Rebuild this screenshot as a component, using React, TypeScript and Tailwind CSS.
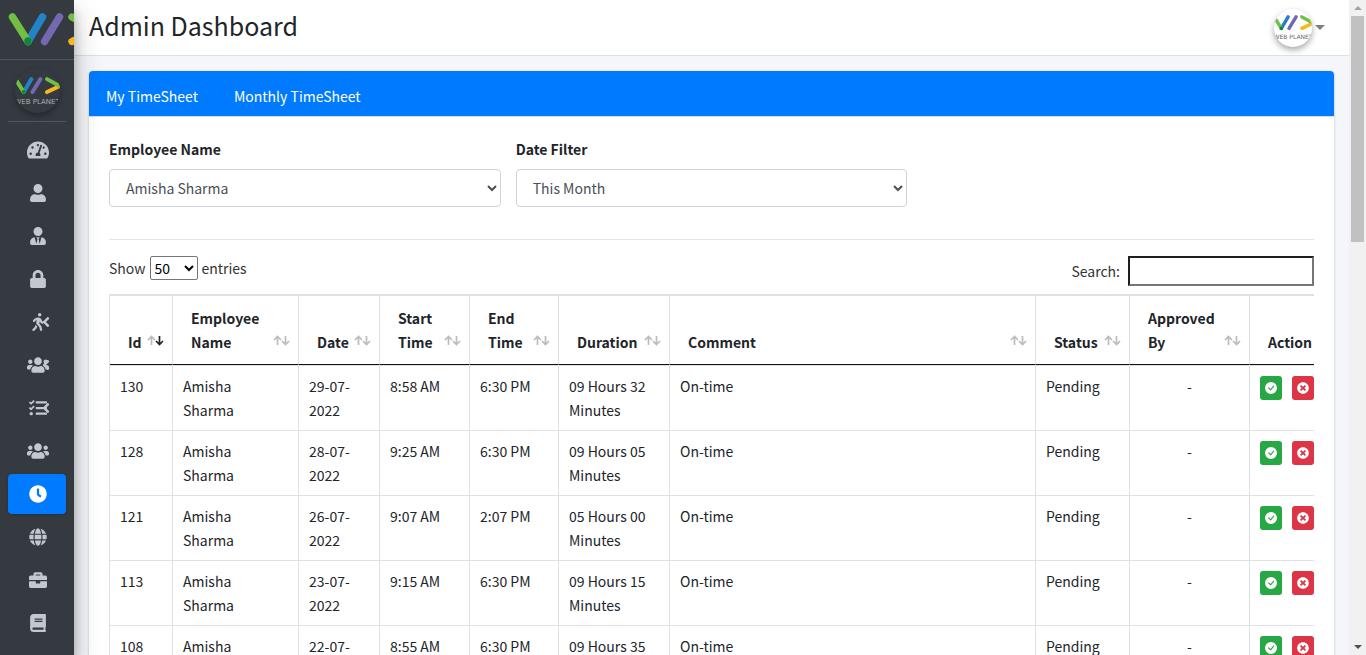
import React from "react";
import {
  FaAngleLeft,
  FaBook,
  FaBriefcase,
  FaClock,
  FaGlobe,
  FaLock,
  FaTachometerAlt,
  FaTasks,
  FaTimesCircle,
  FaUser,
  FaUsers,
  FaUserTie,
  FaWalking,
} from "react-icons/fa";
import { BsCheckCircleFill } from "react-icons/bs";
import type { IconType } from "react-icons";

type NavItem = { label: string; icon: IconType; submenu?: boolean; active?: boolean };

const navItems: NavItem[] = [
  { label: "Dashboard", icon: FaTachometerAlt },
  { label: "Profile", icon: FaUser },
  { label: "Manager", icon: FaUserTie },
  { label: "Permissions", icon: FaLock },
  { label: "Leave", icon: FaWalking, submenu: true },
  { label: "Employees", icon: FaUsers, submenu: true },
  { label: "Tasks", icon: FaTasks, submenu: true },
  { label: "Teams", icon: FaUsers },
  { label: "TimeSheet", icon: FaClock, active: true },
  { label: "Holidays", icon: FaGlobe },
  { label: "Projects", icon: FaBriefcase },
  { label: "Policies", icon: FaBook },
];

type Column = { title: string; width: string; sort?: "both" | "desc" };

const columns: Column[] = [
  { title: "Id", width: "w-[63px]", sort: "desc" },
  { title: "Employee Name", width: "w-[126px]", sort: "both" },
  { title: "Date", width: "w-[81px]", sort: "both" },
  { title: "Start Time", width: "w-[90px]", sort: "both" },
  { title: "End Time", width: "w-[89px]", sort: "both" },
  { title: "Duration", width: "w-[111px]", sort: "both" },
  { title: "Comment", width: "w-auto", sort: "both" },
  { title: "Status", width: "w-[94px]", sort: "both" },
  { title: "Approved By", width: "w-[120px]", sort: "both" },
  { title: "Action", width: "w-[76px]" },
];

const rows = [
  ["130", "Amisha Sharma", "29-07-2022", "8:58 AM", "6:30 PM", "09 Hours 32 Minutes", "On-time", "Pending"],
  ["128", "Amisha Sharma", "28-07-2022", "9:25 AM", "6:30 PM", "09 Hours 05 Minutes", "On-time", "Pending"],
  ["121", "Amisha Sharma", "26-07-2022", "9:07 AM", "2:07 PM", "05 Hours 00 Minutes", "On-time", "Pending"],
  ["113", "Amisha Sharma", "23-07-2022", "9:15 AM", "6:30 PM", "09 Hours 15 Minutes", "On-time", "Pending"],
  ["108", "Amisha Sharma", "22-07-2022", "8:55 AM", "6:30 PM", "09 Hours 35 Minutes", "On-time", "Pending"],
];

function LogoMark({ className }: { className: string }) {
  return (
    <svg viewBox="0 0 92 34" className={className} fill="none" strokeWidth="7.400" strokeLinecap="round" aria-hidden="true">
      <path d="M34.500 4 20 28.500" stroke="#2383c8" />
      <path d="M4.500 4 20 28.500" stroke="#72bf44" />
      <path d="M20 28.500v-.5" stroke="#12853f" />
      <path d="M51.500 4 36.500 28.500" stroke="#7468b0" />
      <path d="M64 28.500 86 18" stroke="#f9b817" />
      <path d="M64 4 86 16" stroke="#72bf44" />
    </svg>
  );
}

function Avatar({ dark }: { dark?: boolean }) {
  return (
    <span
      className={
        dark
          ? "flex size-[45px] flex-col items-center justify-center overflow-hidden rounded-full bg-[#343a40] text-[#a9adb3] shadow-[0_3px_6px_rgba(0,0,0,0.3)]"
          : "flex size-[38px] flex-col items-center justify-center overflow-hidden rounded-full bg-white text-[#666] shadow-[0_3px_6px_rgba(0,0,0,0.35)]"
      }
    >
      <LogoMark className={dark ? "h-[18px] w-[49px] shrink-0" : "h-[16px] w-[43px] shrink-0"} />
      <span
        className={
          dark
            ? "mt-1 font-['DejaVu_Sans',sans-serif] text-[7px] leading-[6px] whitespace-nowrap"
            : "mt-[3px] font-['DejaVu_Sans',sans-serif] text-[6px] leading-[6px] whitespace-nowrap"
        }
      >
        WEB PLANET
      </span>
    </span>
  );
}

function Sidebar() {
  return (
    <aside className="z-10 flex w-[74px] shrink-0 flex-col bg-[#343a40] shadow-[0_14px_28px_rgba(0,0,0,0.25),0_10px_10px_rgba(0,0,0,0.22)]">
      <a href="#" aria-label="Web Planet" className="flex h-[60px] shrink-0 items-center overflow-hidden border-b border-[#4b545c] pl-2">
        <LogoMark className="h-[34px] w-[92px] shrink-0" />
      </a>
      <a href="#" aria-label="Account" className="mx-2 mb-2 flex h-[62px] shrink-0 items-center justify-center border-b border-[#4f5962]">
        <Avatar dark />
      </a>
      <nav className="flex flex-col gap-[3px] px-2">
        {navItems.map(({ label, icon: Icon, submenu, active }) => (
          <a
            key={label}
            href="#"
            aria-label={label}
            className={
              active
                ? "relative flex h-10 shrink-0 items-center justify-center rounded bg-[#007bff] pl-px text-white shadow-[0_1px_3px_rgba(0,0,0,0.2)]"
                : "relative flex h-10 shrink-0 items-center justify-center rounded pl-px text-[#c2c7d0]"
            }
          >
            <Icon className={label === "Dashboard" || label === "Employees" || label === "Teams" ? "size-[22px]" : "size-[18px]"} />
            {submenu && <FaAngleLeft className="absolute top-3 right-3 size-4" />}
          </a>
        ))}
      </nav>
    </aside>
  );
}

function SortArrows({ sort }: { sort: "both" | "desc" }) {
  return (
    <span className="absolute right-2 bottom-3 flex" aria-hidden="true">
      <span className="-mr-px opacity-30">
        <Arrow up />
      </span>
      <span className={sort === "desc" ? "opacity-100" : "opacity-30"}>
        <Arrow />
      </span>
    </span>
  );
}

function Arrow({ up }: { up?: boolean }) {
  return (
    <svg viewBox="0 0 9 24" className="h-6 w-[9px]" fill="none" stroke="#212529" strokeWidth="1.700">
      {up ? <path d="M4.500 17V8.500M1 12l3.500-3.500L8 12" /> : <path d="M4.500 8v8.500M1 13l3.500 3.500L8 13" />}
    </svg>
  );
}

function TimesheetTable() {
  return (
    <div className="overflow-hidden">
      <table className="w-[calc(100%+12px)] table-fixed border-separate border-spacing-0 border-t border-l border-[#dee2e6]">
        <thead>
          <tr>
            {columns.map((c) => (
              <th
                key={c.title}
                className={`${c.width} relative border-t border-r border-t-[#dee2e6] border-r-[#dee2e6] border-b border-b-[#111] pt-[10px] pr-[30px] pb-[10px] pl-[18px] text-left align-bottom font-bold last:pr-0`}
              >
                {c.title}
                {c.sort && <SortArrows sort={c.sort} />}
              </th>
            ))}
          </tr>
        </thead>
        <tbody>
          {rows.map((r) => (
            <tr key={r[0]}>
              {r.map((cell, i) => (
                <td key={i} className="border-t border-r border-[#dee2e6] py-2 pr-4 pl-[10px] align-top">
                  {cell}
                </td>
              ))}
              <td className="border-t border-r border-[#dee2e6] px-[10px] py-2 text-center align-top">-</td>
              <td className="border-t border-r border-[#dee2e6] px-[10px] pt-[10px] pb-2 align-top">
                <div className="flex gap-[10px]">
                  <button type="button" aria-label={`Approve ${r[0]}`} className="flex h-6 w-[22px] shrink-0 items-center justify-center rounded-[3px] bg-[#28a745] text-white">
                    <BsCheckCircleFill className="size-3" />
                  </button>
                  <button type="button" aria-label={`Reject ${r[0]}`} className="flex h-6 w-[22px] shrink-0 items-center justify-center rounded-[3px] bg-[#dc3545] text-white">
                    <FaTimesCircle className="size-3" />
                  </button>
                </div>
              </td>
            </tr>
          ))}
        </tbody>
      </table>
    </div>
  );
}

function FilterSelect({ id, label, value }: { id: string; label: string; value: string }) {
  return (
    <div className="flex flex-col gap-2">
      <label htmlFor={id} className="font-bold">
        {label}
      </label>
      <select id={id} className="h-[38px] w-full rounded border border-[#ced4da] bg-white px-3 text-[#495057]">
        <option>{value}</option>
      </select>
    </div>
  );
}

function PageScrollbar() {
  return (
    <div className="flex w-[17px] shrink-0 flex-col items-center bg-[#f1f1f1]" aria-hidden="true">
      <svg viewBox="0 0 17 16" className="h-4 w-[17px] shrink-0">
        <path d="M5 10h8L9 6z" fill="#a3a3a3" />
      </svg>
      <div className="h-[226px] w-[13px] bg-[#c1c1c1]" />
      <svg viewBox="0 0 17 16" className="mt-auto h-4 w-[17px] shrink-0">
        <path d="M5 6h8L9 10z" fill="#505050" />
      </svg>
    </div>
  );
}

export default function App() {
  return (
    <div className="flex h-screen overflow-hidden bg-[#f4f6f9] font-['Source_Sans_Pro','Noto_Sans_CJK_SC',sans-serif] text-[14px] leading-6 text-[#212529]">
      <Sidebar />
      <div className="min-w-0 flex-1">
        <header className="flex h-14 items-center justify-between border-b border-[#dee2e6] bg-white pr-6 pl-[15px]">
          <h1 className="pb-1.5 text-[25px] leading-8">Admin Dashboard</h1>
          <button type="button" aria-label="Account menu" className="flex items-center gap-[3px]">
            <Avatar />
            <svg viewBox="0 0 10 5" className="h-[5px] w-[10px]" aria-hidden="true">
              <path d="M0 0h10L5 5z" fill="#7b8085" />
            </svg>
          </button>
        </header>
        <main className="p-[15px]">
          <section className="rounded bg-white shadow-[0_0_1px_rgba(0,0,0,0.125),0_1px_3px_rgba(0,0,0,0.2)]">
            <nav className="flex h-[46px] items-center gap-9 rounded-t border-b border-[#d5dce3] bg-[#007bff] px-[17px] pt-[5px] text-white">
              <a href="#">My TimeSheet</a>
              <a href="#">Monthly TimeSheet</a>
            </nav>
            <div className="px-5 pt-5 pb-5">
              <div className="grid grid-cols-3 gap-[15px] border-b border-[#e5e5e5] pb-8">
                <FilterSelect id="employee" label="Employee Name" value="Amisha Sharma" />
                <FilterSelect id="date-filter" label="Date Filter" value="This Month" />
              </div>
              <div className="flex items-start justify-between pt-4 pb-2 text-[#333]">
                <label className="flex items-center gap-1">
                  Show
                  <select className="h-6 w-12 rounded-[2px] border border-[#767676] bg-white text-black">
                    <option>50</option>
                  </select>
                  entries
                </label>
                <label className="flex items-center gap-2">
                  Search:
                  <input type="search" className="h-[30px] w-[186px] border-2 border-[#767676] border-t-[#1f1f1f] border-l-[#1f1f1f] bg-white px-1" />
                </label>
              </div>
              <TimesheetTable />
            </div>
          </section>
        </main>
      </div>
      <PageScrollbar />
    </div>
  );
}
